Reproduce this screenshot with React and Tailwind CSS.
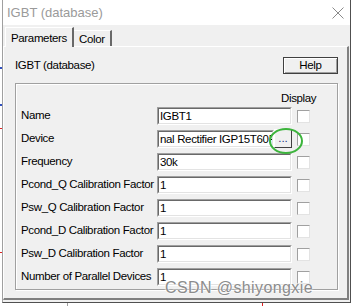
const rows = [
  { label: 'Name', value: 'IGBT1' },
  { label: 'Device', value: 'nal Rectifier IGP15T60F', browse: true },
  { label: 'Frequency', value: '30k' },
  { label: 'Pcond_Q Calibration Factor', value: '1' },
  { label: 'Psw_Q Calibration Factor', value: '1' },
  { label: 'Pcond_D Calibration Factor', value: '1' },
  { label: 'Psw_D Calibration Factor', value: '1' },
  { label: 'Number of Parallel Devices', value: '1' },
];

function Field({ value, width }) {
  return (
    <div
      className={`${width} h-[18px] border border-t-[#a0a0a0] border-l-[#a0a0a0] border-r-white border-b-white`}
    >
      <div className="h-full border border-t-[#696969] border-l-[#696969] border-r-[#e3e3e3] border-b-[#e3e3e3] bg-white overflow-hidden">
        <div className="pl-[1px] leading-[14px] whitespace-nowrap text-black">{value}</div>
      </div>
    </div>
  );
}

function Check() {
  return (
    <div className="w-[13px] h-[13px] border border-t-[#a0a0a0] border-l-[#a0a0a0] border-r-[#e3e3e3] border-b-[#e3e3e3] bg-white" />
  );
}

export default function App() {
  return (
    <div
      className="relative w-[353px] h-[306px] bg-white overflow-hidden text-[11.5px] tracking-[-0.35px] text-black"
      style={{ fontFamily: '"Liberation Sans", Arial, sans-serif' }}
    >
      {/* canvas marks behind the dialog */}
      <div className="absolute left-0 top-[67px] w-[2px] h-[2px] bg-[#3050c0]" />
      <div className="absolute left-0 top-[104px] w-[2px] h-[2px] bg-[#3050c0]" />
      <div className="absolute left-0 top-[128px] w-[2px] h-[1px] bg-[#e02020]" />
      <div className="absolute left-0 top-[252px] w-[2px] h-[1px] bg-[#e02020]" />
      <div className="absolute left-[67px] top-[303px] w-[1px] h-[3px] bg-[#a0a0a0]" />
      <div className="absolute left-[262px] top-[303px] w-[1px] h-[3px] bg-[#e02020]" />

      <div className="ml-[2px] w-[349px] h-[303px] flex flex-col border-l border-[#a0a0a0] border-r border-r-[#505050] border-b border-b-[#505050]">
        {/* title bar */}
        <div className="h-[25px] shrink-0 bg-white flex items-center justify-between pl-[4px] pr-[6px]">
          <span className="text-[13px] tracking-normal text-[#9a9a9a]">IGBT (database)</span>
          <svg width="12" height="12" viewBox="0 0 12 12" className="mt-[1px]">
            <path d="M0.5 0.5 L11.5 11.5 M11.5 0.5 L0.5 11.5" stroke="#8a8a8a" strokeWidth="1" />
          </svg>
        </div>

        <div className="flex-1 flex flex-col bg-[#f0f0f0] pr-[1px] pb-[2px]">
          {/* tabs */}
          <div className="h-[21px] shrink-0 flex items-end pl-[2px] relative z-10">
            <div className="h-[20px] -mb-px px-[5px] pt-[2px] bg-[#f0f0f0] border-l border-t border-white border-r-2 border-r-[#696969]">
              Parameters
            </div>
            <div className="h-[16px] px-[5px] pt-[2px] leading-[13px] border-t border-white border-r-2 border-r-[#696969]">
              Color
            </div>
          </div>

          {/* tab panel */}
          <div className="flex-1 flex flex-col border-l border-t border-white border-r-2 border-r-[#808080] border-b-2 border-b-[#808080] pt-[10px] pl-[11px] pr-[9px]">
            <div className="h-[17px] flex items-center justify-between">
              <span>IGBT (database)</span>
              <div className="w-[55px] h-[17px] border border-[#404040] bg-[#f0f0f0] shadow-[inset_1px_1px_0_white,inset_-1px_-1px_0_#a0a0a0] flex items-center justify-center">
                Help
              </div>
            </div>

            {/* group box */}
            <div className="mt-[9px] h-[207px] border border-[#a0a0a0] shadow-[1px_1px_0_white,inset_1px_1px_0_white] pl-[5px] pt-[7px]">
              <div className="h-[14px] pl-[260px] leading-[14px]">Display</div>
              <div className="mt-[2px] flex flex-col gap-[5px]">
                {rows.map((r) => (
                  <div key={r.label} className="h-[18px] flex items-center">
                    <span className="w-[136px] whitespace-nowrap">{r.label}</span>
                    {r.browse ? (
                      <div className="flex w-[135px]">
                        <Field value={r.value} width="w-[117px]" />
                        <div className="w-[18px] h-[19px] -mt-[1px] border border-t-white border-l-white border-r-[#404040] border-b-[#404040] bg-[#f0f0f0] flex items-center justify-center text-[#1a2a80] tracking-normal">
                          ...
                        </div>
                      </div>
                    ) : (
                      <Field value={r.value} width="w-[135px]" />
                    )}
                    <div className="ml-[5px]">
                      <Check />
                    </div>
                  </div>
                ))}
              </div>
            </div>
          </div>
        </div>
      </div>

      {/* annotation ring */}
      <svg className="absolute left-[268px] top-[127px]" width="36" height="28" viewBox="0 0 36 28">
        <ellipse cx="18" cy="14" rx="16" ry="12" fill="none" stroke="#3cb43c" strokeWidth="2" />
      </svg>

      {/* watermark */}
      <div
        className="absolute left-[165px] top-[276px] text-[16px] tracking-[0.4px] text-[#8c8c8c]"
        style={{ textShadow: '0 0 2px #fff, 0 0 2px #fff' }}
      >
        CSDN @shiyongxie
      </div>
    </div>
  );
}
